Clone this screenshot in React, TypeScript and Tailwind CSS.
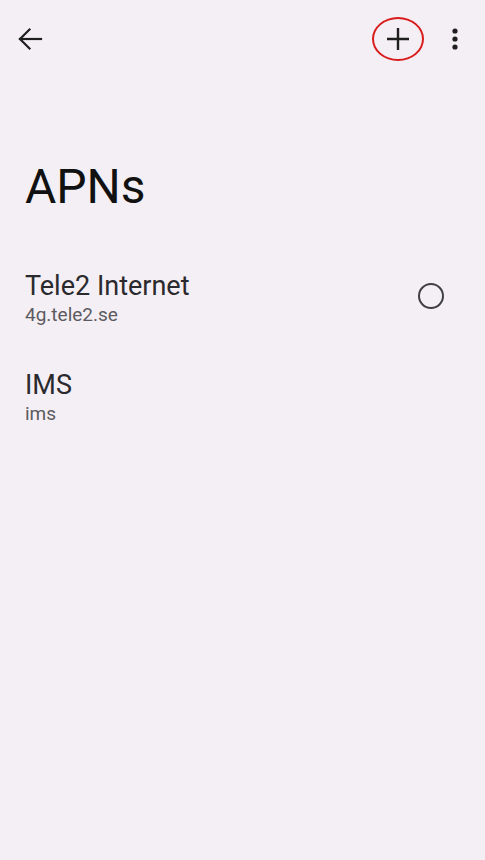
import React from 'react';

const apns = [
	{ name: 'Tele2 Internet', apn: '4g.tele2.se', radio: true },
	{ name: 'IMS', apn: 'ims', radio: false },
];

const BackIcon = () => (
	<svg width="26" height="24" viewBox="0 0 26 24" fill="none" stroke="#1f1f1f" strokeWidth="2.2" strokeLinecap="square">
		<path d="M24 12H3" />
		<path d="M12.5 2.5L3 12l9.5 9.5" />
	</svg>
);

const PlusIcon = () => (
	<svg width="24" height="24" viewBox="0 0 24 24" fill="none" stroke="#1f1f1f" strokeWidth="2.4">
		<path d="M12 1v22M1 12h22" />
	</svg>
);

const MoreIcon = () => (
	<svg width="8" height="24" viewBox="0 0 8 24" fill="#1f1f1f">
		<circle cx="4" cy="4" r="2.6" />
		<circle cx="4" cy="12" r="2.6" />
		<circle cx="4" cy="20" r="2.6" />
	</svg>
);

const App = () => {
	return (
		<div
			className="w-[485px] h-[860px] bg-[#f4eff4] text-[#1c1b1f] overflow-hidden"
			style={{ fontFamily: 'Roboto, "Noto Sans", sans-serif' }}
		>
			{/* top bar */}
			<div className="h-[77px] flex items-center pl-[17px] pr-[26px]">
				<BackIcon />
				<div className="flex-1" />
				<div className="relative w-[52px] h-[44px] flex items-center justify-center mr-[27px]">
					<PlusIcon />
					<div className="absolute inset-0 rounded-[50%] border-2 border-[#d91c1c]" />
				</div>
				<MoreIcon />
			</div>

			<h1 className="px-[25px] pt-[82px] text-[48px] leading-[56px] font-normal text-[#111]">APNs</h1>

			<div className="mt-[35px]">
				{apns.map((item) => (
					<div key={item.name} className="flex items-center pl-[25px] pr-[41px] h-[99px]">
						<div className="flex-1 pb-[2px]">
							<div className="text-[27px] leading-[32px] text-[#2a2a2e]">{item.name}</div>
							<div className="text-[19px] leading-[26px] text-[#5c5a60]">{item.apn}</div>
						</div>
						{item.radio && (
							<div className="w-[26px] h-[26px] rounded-full border-[2.5px] border-[#3f3f44] mb-[8px]" />
						)}
					</div>
				))}
			</div>
		</div>
	);
};

export default App;
